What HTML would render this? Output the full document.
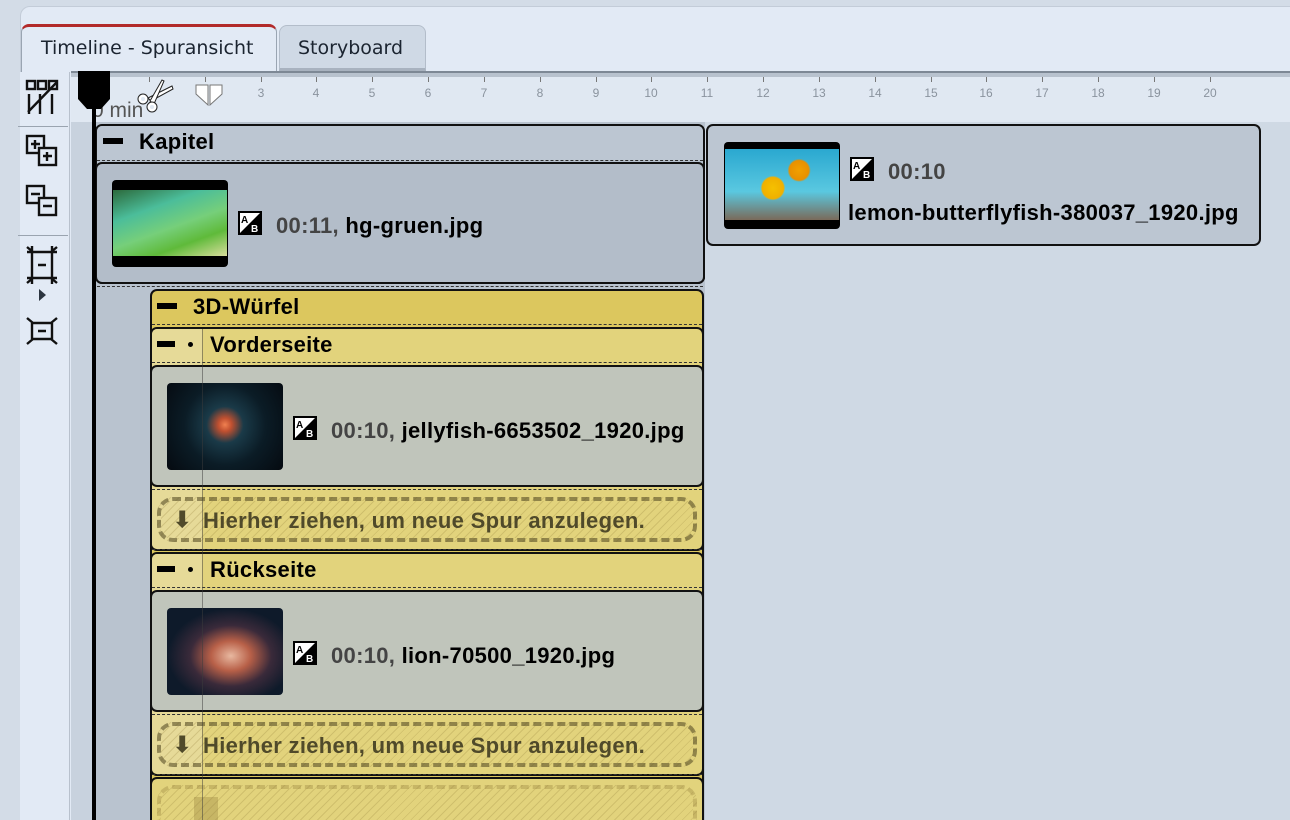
<!DOCTYPE html>
<html><head><meta charset="utf-8"><style>
*{box-sizing:border-box;margin:0;padding:0}
html,body{width:1290px;height:820px;overflow:hidden}
body{background:#d3dce7;font-family:"Liberation Sans",sans-serif;position:relative}
.a{position:absolute}
.box{position:absolute;border:2px solid #111;border-radius:7px}
.t{position:absolute;font-weight:bold;font-size:22px;letter-spacing:0.3px;color:#000;white-space:nowrap}
.g{color:#444}
.dash{position:absolute;height:0;border-top:1px dashed #333}
.drop{position:absolute;border:4px dashed rgba(90,80,40,.6);border-radius:16px;background:repeating-linear-gradient(135deg,rgba(150,130,60,.25) 0 1px,transparent 1px 6px)}
.dt{position:absolute;font-size:22px;letter-spacing:0.3px;font-weight:bold;color:#504a2a;white-space:nowrap}
.num{position:absolute;top:86px;font-size:12px;color:#8a939e;width:20px;text-align:center}
.tick{position:absolute;top:77px;width:1px;height:5px;background:#777}
</style></head><body>
<div class="a" style="left:20px;top:6px;width:1280px;height:820px;background:#e2eaf5;border:1px solid #c3ccd8;border-radius:10px 0 0 0"></div>
<div class="a" style="left:21px;top:24px;width:256px;height:50px;background:#e2eaf5;border:1px solid #9aa5b2;border-bottom:none;border-top:3px solid #b22a2a;border-radius:8px 8px 0 0"></div>
<div class="a" style="left:41px;top:37px;color:#1b2430;font-family:'DejaVu Sans',sans-serif;font-size:19px">Timeline - Spuransicht</div>
<div class="a" style="left:279px;top:25px;width:147px;height:46px;background:#cfd9e5;border:1px solid #b3bdca;border-bottom:3px solid #a8b2bf;border-radius:8px 8px 0 0"></div>
<div class="a" style="left:298px;top:37px;color:#1b2430;font-family:'DejaVu Sans',sans-serif;font-size:19px">Storyboard</div>
<div class="a" style="left:20px;top:72px;width:50px;height:748px;background:#e2eaf5;border-right:1px solid #b8c1cd"></div>
<div class="a" style="left:18px;top:126px;width:50px;height:1px;background:#9aa4b0"></div>
<div class="a" style="left:18px;top:235px;width:50px;height:1px;background:#9aa4b0"></div>
<svg class="a" style="left:24px;top:78px" width="40" height="290" viewBox="0 0 40 290" fill="none" stroke="#111" stroke-width="2.4">
 <rect x="3" y="3" width="8" height="8"/><rect x="14" y="3" width="8" height="8"/><rect x="25" y="3" width="8" height="8"/>
 <path d="M5 16v20M16 16v20M28 16v20M4 34L33 4"/>
 <rect x="3" y="58" width="17" height="17"/><rect x="15" y="70" width="17" height="17" fill="#e2eaf5"/>
 <path d="M7 66h9M11 62v9M19 78h9M23 74v9"/>
 <rect x="3" y="108" width="17" height="17"/><rect x="15" y="120" width="17" height="17" fill="#e2eaf5"/>
 <path d="M7 116h9M19 128h9"/>
 <path d="M8 168v38M28 168v38M3 174h30M3 200h30M14 187h8M3 169l6 5M33 169l-6 5M3 205l6-5M33 205l-6-5"/>
 <path d="M8 245v16M28 245v16M8 245h20M8 261h20M14 253h8M3 240l6 5M33 240l-6 5M3 266l6-5M33 266l-6-5"/>
</svg>
<div class="a" style="left:39px;top:289px;border-left:7px solid #2c3540;border-top:6px solid transparent;border-bottom:6px solid transparent"></div>
<div class="a" style="left:71px;top:71px;width:1219px;height:6px;background:#b8c2ce;border-top:2px solid #7d8895"></div>
<div class="a" style="left:71px;top:77px;width:1219px;height:45px;background:#e0e8f2"></div>
<div class="a" style="left:71px;top:122px;width:1219px;height:698px;background:#cfd9e4"></div>
<div class="a" style="left:71px;top:122px;width:24px;height:698px;background:#c8d2de"></div>
<div class="tick" style="left:149px"></div><div class="tick" style="left:205px"></div><div class="tick" style="left:261px"></div><div class="num" style="left:251px">3</div><div class="tick" style="left:316px"></div><div class="num" style="left:306px">4</div><div class="tick" style="left:372px"></div><div class="num" style="left:362px">5</div><div class="tick" style="left:428px"></div><div class="num" style="left:418px">6</div><div class="tick" style="left:484px"></div><div class="num" style="left:474px">7</div><div class="tick" style="left:540px"></div><div class="num" style="left:530px">8</div><div class="tick" style="left:596px"></div><div class="num" style="left:586px">9</div><div class="tick" style="left:651px"></div><div class="num" style="left:641px">10</div><div class="tick" style="left:707px"></div><div class="num" style="left:697px">11</div><div class="tick" style="left:763px"></div><div class="num" style="left:753px">12</div><div class="tick" style="left:819px"></div><div class="num" style="left:809px">13</div><div class="tick" style="left:875px"></div><div class="num" style="left:865px">14</div><div class="tick" style="left:931px"></div><div class="num" style="left:921px">15</div><div class="tick" style="left:986px"></div><div class="num" style="left:976px">16</div><div class="tick" style="left:1042px"></div><div class="num" style="left:1032px">17</div><div class="tick" style="left:1098px"></div><div class="num" style="left:1088px">18</div><div class="tick" style="left:1154px"></div><div class="num" style="left:1144px">19</div><div class="tick" style="left:1210px"></div><div class="num" style="left:1200px">20</div>
<div class="a" style="left:92px;top:99px;font-size:21px;color:#555">0 min</div>
<svg class="a" style="left:134px;top:78px" width="40" height="36" viewBox="0 0 40 36"><g stroke="#222" stroke-width="1" fill="#fff"><path d="M14 20L38 8 39 11 17 23Z"/><path d="M16 23L28 2 30 3 20 26Z"/><circle cx="9" cy="21" r="5"/><circle cx="18" cy="29" r="5"/></g><circle cx="9" cy="21" r="2" fill="#e0e8f2"/><circle cx="18" cy="29" r="2" fill="#e0e8f2"/></svg>
<svg class="a" style="left:194px;top:84px" width="32" height="26"><path d="M2 1h12v20L2 10Z M16 1h12v9L16 21Z" fill="#fff" stroke="#777"/></svg>
<div class="a" style="left:95px;top:122px;width:610px;height:698px;background:#b9c3cf"></div>
<div class="box" style="left:95px;top:124px;width:610px;height:160px;background:#b6c0cc"></div>
<div class="a" style="left:97px;top:126px;width:606px;height:34px;background:#bcc6d2;border-radius:5px 5px 0 0"></div>
<div class="dash" style="left:97px;top:160px;width:606px"></div>
<div class="a" style="left:103px;top:138px;width:20px;height:6px;background:#000"></div>
<div class="t" style="left:139px;top:129px">Kapitel</div>
<div class="box" style="left:95px;top:162px;width:610px;height:122px;background:#b3bdc9"></div>
<div class="a" style="left:112px;top:180px;width:116px;height:87px;background:#000;border-radius:4px"></div>
<div class="a" style="left:113px;top:190px;width:114px;height:66px;background:linear-gradient(160deg,#2c6a3c,#4bbd9a 30%,#76cf7a 55%,#5fba3a 75%,#d8dd9c)"></div>
<svg class="a" style="left:238px;top:211px" width="24" height="24"><rect x="1" y="1" width="22" height="22" fill="#fff" stroke="#000" stroke-width="2"/><path d="M23 1L1 23h22z" fill="#000"/><text x="3" y="12" font-size="10" font-weight="bold" font-family="Liberation Sans">A</text><text x="13" y="21" font-size="10" font-weight="bold" fill="#fff" font-family="Liberation Sans">B</text></svg>
<div class="t" style="left:276px;top:213px"><span class="g">00:11,</span> hg-gruen.jpg</div>
<div class="dash" style="left:97px;top:286px;width:606px"></div>

<div class="box" style="left:150px;top:289px;width:554px;height:540px;background:#dcc75e"></div>
<div class="a" style="left:157px;top:303px;width:20px;height:6px;background:#000"></div>
<div class="t" style="left:193px;top:294px">3D-Würfel</div>
<div class="dash" style="left:152px;top:324px;width:550px"></div>
<div class="box" style="left:150px;top:327px;width:554px;height:224px;background:#e2d37c"></div>
<div class="a" style="left:152px;top:329px;width:50px;height:220px;background:#e6da98;border-radius:5px 0 0 5px"></div>
<div class="a" style="left:157px;top:341px;width:18px;height:6px;background:#000"></div>
<div class="a" style="left:188px;top:342px;width:5px;height:5px;background:#000;border-radius:50%"></div>
<div class="t" style="left:210px;top:332px">Vorderseite</div>
<div class="dash" style="left:152px;top:362px;width:550px"></div>
<div class="box" style="left:150px;top:365px;width:554px;height:122px;background:#c0c5bb"></div>
<div class="a" style="left:167px;top:383px;width:116px;height:87px;border-radius:4px;background:radial-gradient(circle at 50% 48%,#f08050 0,#c05030 9%,#1a3a48 25%,#0b1c26 55%,#050a10)"></div>
<svg class="a" style="left:293px;top:416px" width="24" height="24"><rect x="1" y="1" width="22" height="22" fill="#fff" stroke="#000" stroke-width="2"/><path d="M23 1L1 23h22z" fill="#000"/><text x="3" y="12" font-size="10" font-weight="bold" font-family="Liberation Sans">A</text><text x="13" y="21" font-size="10" font-weight="bold" fill="#fff" font-family="Liberation Sans">B</text></svg>
<div class="t" style="left:331px;top:418px"><span class="g">00:10,</span> jellyfish-6653502_1920.jpg</div>
<div class="dash" style="left:152px;top:489px;width:550px"></div>
<div class="drop" style="left:157px;top:497px;width:540px;height:45px"></div>
<div class="dt" style="left:173px;top:507px">⬇</div>
<div class="dt" style="left:203px;top:508px">Hierher ziehen, um neue Spur anzulegen.</div>
<div class="dash" style="left:152px;top:549px;width:550px"></div>

<div class="box" style="left:150px;top:552px;width:554px;height:224px;background:#e2d37c"></div>
<div class="a" style="left:152px;top:554px;width:50px;height:220px;background:#e6da98;border-radius:5px 0 0 5px"></div>
<div class="a" style="left:157px;top:566px;width:18px;height:6px;background:#000"></div>
<div class="a" style="left:188px;top:567px;width:5px;height:5px;background:#000;border-radius:50%"></div>
<div class="t" style="left:210px;top:557px">Rückseite</div>
<div class="dash" style="left:152px;top:587px;width:550px"></div>
<div class="box" style="left:150px;top:590px;width:554px;height:122px;background:#c0c5bb"></div>
<div class="a" style="left:167px;top:608px;width:116px;height:87px;border-radius:4px;background:radial-gradient(ellipse at 55% 55%,#e8b8a0 0,#b86048 22%,#3a2a3a 45%,#0e1a2a 70%)"></div>
<svg class="a" style="left:293px;top:641px" width="24" height="24"><rect x="1" y="1" width="22" height="22" fill="#fff" stroke="#000" stroke-width="2"/><path d="M23 1L1 23h22z" fill="#000"/><text x="3" y="12" font-size="10" font-weight="bold" font-family="Liberation Sans">A</text><text x="13" y="21" font-size="10" font-weight="bold" fill="#fff" font-family="Liberation Sans">B</text></svg>
<div class="t" style="left:331px;top:643px"><span class="g">00:10,</span> lion-70500_1920.jpg</div>
<div class="dash" style="left:152px;top:714px;width:550px"></div>
<div class="drop" style="left:157px;top:722px;width:540px;height:45px"></div>
<div class="dt" style="left:173px;top:732px">⬇</div>
<div class="dt" style="left:203px;top:733px">Hierher ziehen, um neue Spur anzulegen.</div>
<div class="dash" style="left:152px;top:774px;width:550px"></div>
<div class="box" style="left:150px;top:777px;width:554px;height:60px;background:#e2d37c"></div>
<div class="drop" style="left:157px;top:785px;width:540px;height:50px;border-color:rgba(150,130,60,.35)"></div>
<div class="a" style="left:194px;top:797px;width:24px;height:23px;background:rgba(150,130,60,.35)"></div>
<div class="a" style="left:202px;top:329px;width:1px;height:491px;background:rgba(60,60,60,.5)"></div>

<div class="box" style="left:706px;top:124px;width:555px;height:122px;background:#bcc6d2"></div>
<div class="a" style="left:724px;top:142px;width:116px;height:87px;background:#000;border-radius:4px"></div>
<div class="a" style="left:725px;top:149px;width:114px;height:71px;background:radial-gradient(circle at 42% 55%,#f5c000 0,#f0b000 14%,transparent 16%),radial-gradient(circle at 65% 30%,#f0a000 0,#e89000 11%,transparent 13%),linear-gradient(180deg,#2aa8d0,#5ac8e0 60%,#7a6a5a)"></div>
<svg class="a" style="left:850px;top:157px" width="24" height="24"><rect x="1" y="1" width="22" height="22" fill="#fff" stroke="#000" stroke-width="2"/><path d="M23 1L1 23h22z" fill="#000"/><text x="3" y="12" font-size="10" font-weight="bold" font-family="Liberation Sans">A</text><text x="13" y="21" font-size="10" font-weight="bold" fill="#fff" font-family="Liberation Sans">B</text></svg>
<div class="t g" style="left:888px;top:159px">00:10</div>
<div class="t" style="left:848px;top:200px">lemon-butterflyfish-380037_1920.jpg</div>

<div class="a" style="left:92px;top:100px;width:4px;height:720px;background:#000"></div>
<svg class="a" style="left:78px;top:71px" width="32" height="40"><path d="M0 0h32v28l-9 10h-14L0 28z" fill="#000"/></svg>
</body></html>
